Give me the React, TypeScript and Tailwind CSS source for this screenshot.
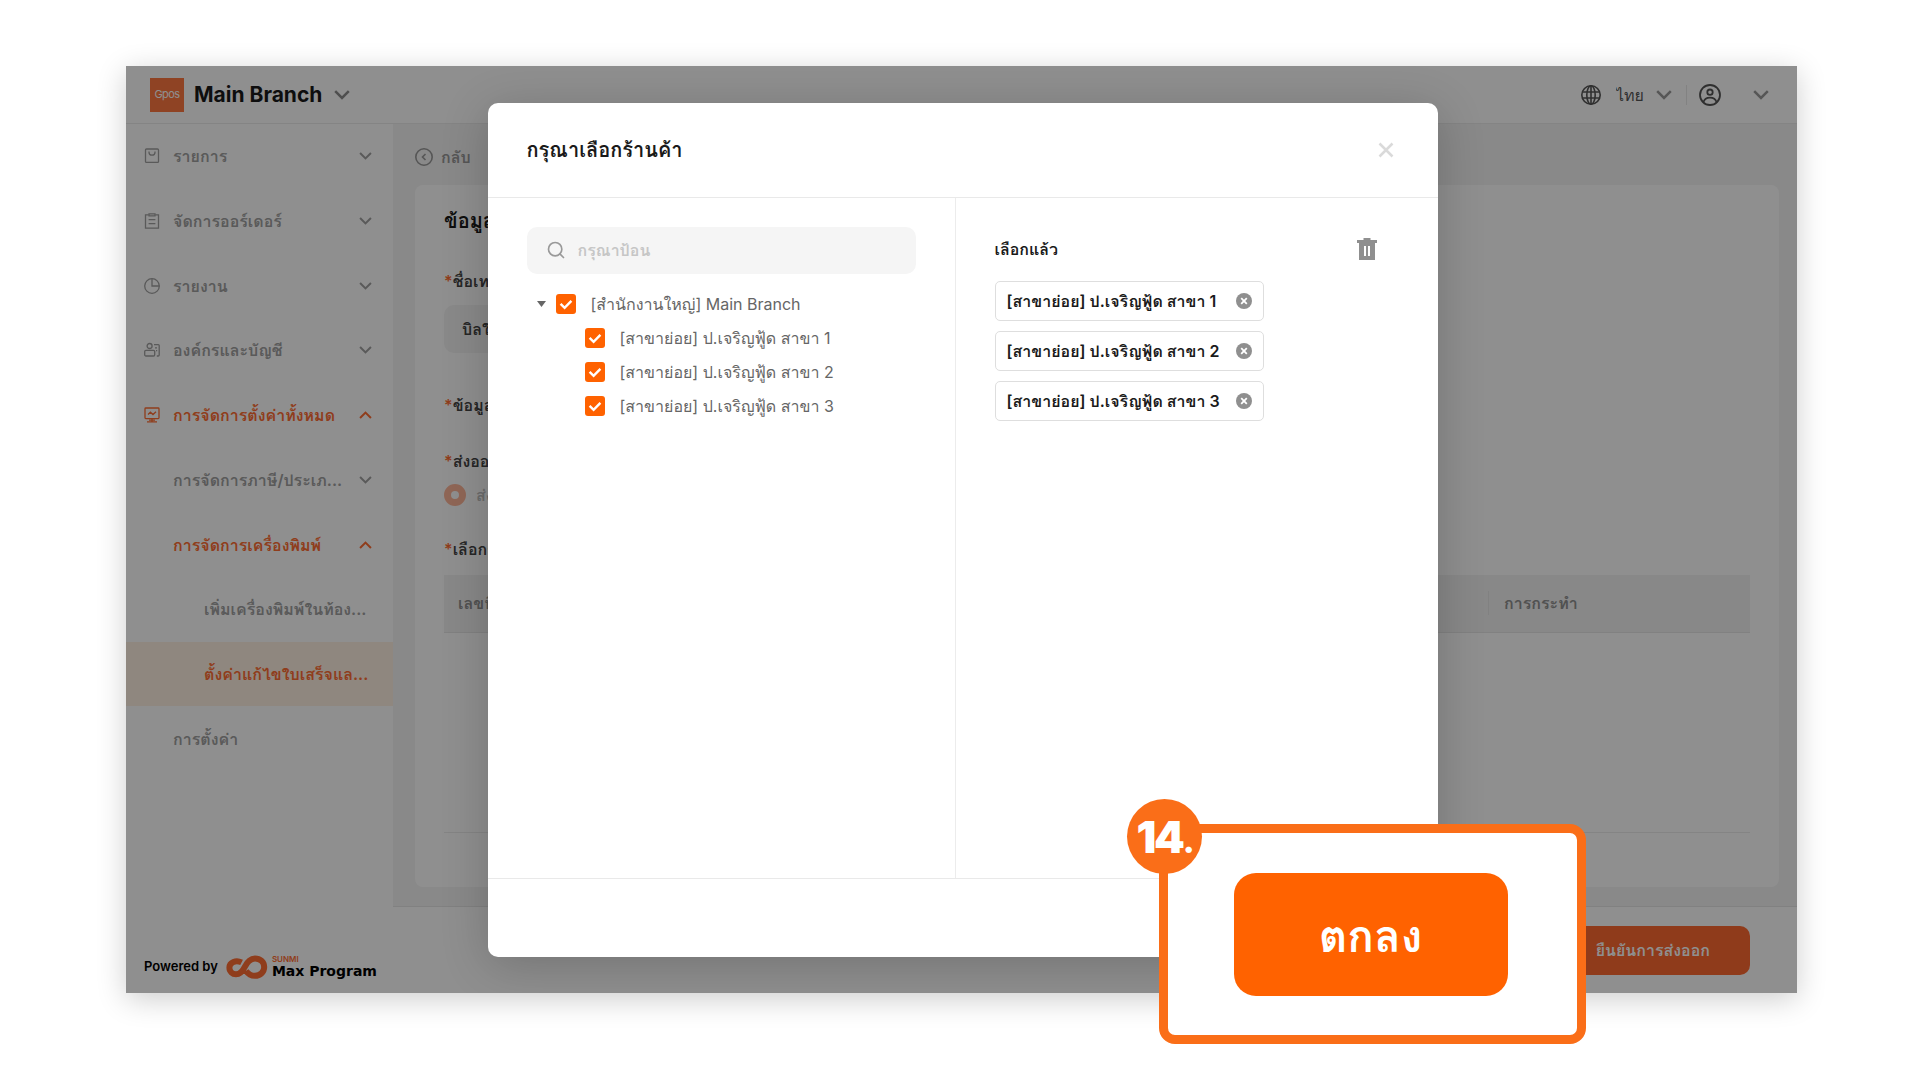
import React, { useState } from 'react';
import { Search } from 'lucide-react';

interface MenuItem {
  id: string;
  label: string;
  level: 0 | 1 | 2;
  icon?: React.ReactNode;
  arrow?: 'down' | 'up';
  active?: boolean;
  selected?: boolean;
}

const iconProps = {
  viewBox: '0 0 16 16',
  fill: 'none',
  stroke: 'currentColor',
  strokeWidth: 1.3,
  className: 'h-4 w-4 shrink-0',
};

const OrdersIcon = () => (
  <svg {...iconProps}>
    <rect x="1.5" y="1" width="13" height="13.4" rx="1" />
    <path d="M5 3.6v.6a3 3 0 0 0 6 0v-.6" />
  </svg>
);

const ClipboardIcon = () => (
  <svg {...iconProps}>
    <path d="M4.800 1.800H1.500v13.400h13V1.800h-3.300" />
    <path d="M5 .8h6v2H5zM4.600 6.600h6.800M4.600 10.600h6.800" />
  </svg>
);

const ReportIcon = () => (
  <svg {...iconProps}>
    <circle cx="8" cy="8" r="7.3" />
    <path d="M8 .8V8h7.2" />
  </svg>
);

const OrgIcon = () => (
  <svg {...iconProps}>
    <circle cx="5.6" cy="4" r="2.5" />
    <rect x=".7" y="8.4" width="10" height="5.6" rx="1.2" />
    <path d="M10 2.6h4.2a1 1 0 0 1 1 1V13a1 1 0 0 1-1 1h-1.4M11 5.8h2M12 8.6h1.2" />
  </svg>
);

const SettingsIcon = () => (
  <svg {...iconProps}>
    <rect x="1" y="1" width="14" height="10.6" rx=".8" />
    <path d="M4 7.4l2.4-2.2 2.6 2.4L12 4.8M8 11.6v3M3 14.8h10M5 13.2h6" />
  </svg>
);

const Chevron: React.FC<{ className?: string; up?: boolean }> = ({ className = '', up }) => (
  <svg
    viewBox="0 0 16 10"
    className={`${className} ${up ? 'rotate-180' : ''}`}
    fill="none"
    stroke="currentColor"
    strokeWidth="2.5"
  >
    <path d="M1.2 1.2L8 8l6.800-6.800" />
  </svg>
);

const MENU: MenuItem[] = [
  { id: 'orders', label: 'รายการ', level: 0, icon: <OrdersIcon />, arrow: 'down' },
  { id: 'manage', label: 'จัดการออร์เดอร์', level: 0, icon: <ClipboardIcon />, arrow: 'down' },
  { id: 'report', label: 'รายงาน', level: 0, icon: <ReportIcon />, arrow: 'down' },
  { id: 'org', label: 'องค์กรและบัญชี', level: 0, icon: <OrgIcon />, arrow: 'down' },
  { id: 'settings', label: 'การจัดการตั้งค่าทั้งหมด', level: 0, icon: <SettingsIcon />, arrow: 'up', active: true },
  { id: 'tax', label: 'การจัดการภาษี/ประเภ...', level: 1, arrow: 'down' },
  { id: 'printer', label: 'การจัดการเครื่องพิมพ์', level: 1, arrow: 'up', active: true },
  { id: 'add-printer', label: 'เพิ่มเครื่องพิมพ์ในท้อง...', level: 2 },
  { id: 'receipt', label: 'ตั้งค่าแก้ไขใบเสร็จแล...', level: 2, active: true, selected: true },
  { id: 'config', label: 'การตั้งค่า', level: 1 },
];

const BRANCHES = [
  '[สาขาย่อย] ป.เจริญฟู้ด สาขา 1',
  '[สาขาย่อย] ป.เจริญฟู้ด สาขา 2',
  '[สาขาย่อย] ป.เจริญฟู้ด สาขา 3',
];

const PAD = { 0: 'pl-[18px]', 1: 'pl-[47px]', 2: 'pl-[78px]' };

const Sidebar: React.FC = () => (
  <aside className="flex w-[267px] shrink-0 flex-col justify-between bg-white">
    <nav className="grid h-[647px] grid-rows-10">
      {MENU.map((item) => (
        <button
          key={item.id}
          className={`flex items-center gap-[13px] whitespace-nowrap text-left text-base font-semibold ${PAD[item.level]} ${
            item.active ? 'text-[#ff6d32]' : 'text-[#a0a0a0]'
          } ${item.selected ? 'bg-[#fff0e2]' : ''}`}
        >
          {item.icon}
          <span>{item.label}</span>
          {item.arrow && <Chevron up={item.arrow === 'up'} className="mr-[21px] ml-auto h-2 w-[13px]" />}
        </button>
      ))}
    </nav>

    <div className="flex items-center gap-2 pb-[14px] pl-[18px]">
      <span className="text-[13px] font-semibold">Powered by</span>
      <svg viewBox="0 0 42 24" className="h-6 w-[42px]" fill="none" stroke="#ff6d32" strokeWidth="6">
        <path d="M15.600 7.400C10 4.600 3.400 7.200 3.400 12.600c0 4.200 3.200 6.600 6.600 6.600 4.400 0 6.400-2.600 8.800-7.400C21.400 6.400 24 3.600 29 3.400c5 0 9.200 3.600 9.200 8.600s-4 8.800-9.200 8.800c-4.400 0-7-2-9-5" />
      </svg>
      <span className="-ml-1 flex flex-col">
        <span className="text-[8px] leading-[8px] font-semibold text-[#ff6d32]">SUNMI</span>
        <span className="font-['DejaVu_Sans',sans-serif] text-sm leading-4 font-bold">Max Program</span>
      </span>
    </div>
  </aside>
);

const TopBar: React.FC = () => (
  <header className="flex h-[58px] items-center border-b border-[#ececec] bg-white pr-7 pl-6">
    <span className="flex h-[34px] w-[34px] items-center justify-center bg-[#ff7840] text-[11px] tracking-tighter text-white">
      Gpos
    </span>
    <button className="ml-[10px] flex items-center gap-3 text-[21px] font-bold text-[#1a1a1a]">
      Main Branch
      <Chevron className="h-[10px] w-4 text-[#8c8c8c]" />
    </button>

    <div className="ml-auto flex items-center text-[#555]">
      <svg viewBox="0 0 20 20" className="h-5 w-5" fill="none" stroke="currentColor" strokeWidth="1.600">
        <circle cx="10" cy="10" r="9.200" />
        <ellipse cx="10" cy="10" rx="4.200" ry="9.200" />
        <path d="M10 .8v18.400M1.500 7h17M1.500 13h17" />
      </svg>
      <label className="relative ml-[15px] flex items-center">
        <span className="sr-only">ภาษา</span>
        <select className="h-8 w-14 appearance-none bg-transparent text-base leading-8" defaultValue="th">
          <option value="th">ไทย</option>
        </select>
        <Chevron className="pointer-events-none absolute right-0 h-[10px] w-4 text-[#999]" />
      </label>
      <span className="mr-3 ml-[14px] h-5 w-px bg-[#e8e8e8]" />
      <button className="flex items-center gap-8" aria-label="บัญชีผู้ใช้">
        <svg viewBox="0 0 22 22" className="h-[22px] w-[22px]" fill="none" stroke="currentColor" strokeWidth="1.800">
          <circle cx="11" cy="11" r="10" />
          <circle cx="11" cy="8.200" r="2.700" />
          <path d="M4.400 18.200c1-3.400 3.600-4.600 6.600-4.600s5.600 1.200 6.600 4.600" />
        </svg>
        <Chevron className="h-[10px] w-4 text-[#999]" />
      </button>
    </div>
  </header>
);

const FieldLabel: React.FC<{ htmlFor?: string; children: React.ReactNode }> = ({ htmlFor, children }) => (
  <label htmlFor={htmlFor} className="block text-base leading-6 font-semibold text-[#444]">
    <span className="text-[#ff6d32]">*</span>
    {children}
  </label>
);

const TemplatePage: React.FC = () => (
  <main className="flex min-w-0 flex-1 flex-col bg-[#f4f4f4]">
    <a href="#back" className="flex h-[61px] items-center gap-2 pt-1 pl-[22px] text-base font-semibold text-[#999]">
      <svg viewBox="0 0 18 18" className="h-[18px] w-[18px]" fill="none" stroke="currentColor" strokeWidth="1.600">
        <circle cx="9" cy="9" r="8.200" />
        <path d="M10.500 6L7.500 9l3 3" />
      </svg>
      กลับ
    </a>

    <section className="mr-[18px] ml-[22px] flex-1 rounded-lg bg-white px-[29px] pt-5">
      <h2 className="text-xl leading-8 font-bold text-[#1a1a1a]">ข้อมูลพื้นฐาน</h2>
      <div className="mt-8">
        <FieldLabel htmlFor="template">ชื่อเทมเพลต</FieldLabel>
        <input
          id="template"
          type="text"
          defaultValue="บิลใบเสร็จ"
          className="mt-3 block h-12 w-[600px] rounded-[10px] bg-[#f4f4f4] px-[18px] text-base font-semibold text-[#444]"
        />
      </div>
      <div className="mt-10">
        <FieldLabel>ข้อมูลใบเสร็จ</FieldLabel>
      </div>
      <div className="mt-8">
        <FieldLabel>ส่งออกไปยัง</FieldLabel>
        <label className="mt-[10px] flex items-center gap-[10px] text-base font-semibold text-[#c0c0c0]">
          <input
            type="radio"
            defaultChecked
            className="h-[22px] w-[22px] appearance-none rounded-full border-[7px] border-[#ffb79a] bg-white"
          />
          ส่งออกทั้งหมด
        </label>
      </div>
      <div className="mt-[30px]">
        <FieldLabel>เลือกร้านค้า</FieldLabel>
      </div>
      <div className="mt-[14px] h-[258px] border-b border-[#ececec]">
        <table className="w-full text-left text-base text-[#909090]">
          <thead>
            <tr className="h-[57px] border-b border-[#e6e6e6] bg-[#f2f2f2]">
              <th className="pl-[14px] font-semibold">เลขที่</th>
              <th className="w-[262px] font-semibold">
                <span className="block border-l border-[#e6e6e6] pl-[15px]">การกระทำ</span>
              </th>
            </tr>
          </thead>
        </table>
      </div>
    </section>

    <footer className="mt-[19px] flex h-[87px] items-center justify-end border-t border-[#e6e6e6] bg-white pr-[47px]">
      <button className="h-[49px] rounded-[10px] bg-[#ff6a30] px-10 text-base font-semibold text-white">
        ยืนยันการส่งออก
      </button>
    </footer>
  </main>
);

const Tick: React.FC<{ label: string }> = ({ label }) => (
  <label className="flex h-[34px] items-center gap-[15px] text-base text-[#666]">
    <span className="relative flex h-5 w-5 items-center justify-center">
      <input type="checkbox" defaultChecked className="h-5 w-5 appearance-none rounded-[3px] bg-[#ff6200]" />
      <svg
        viewBox="0 0 20 20"
        className="pointer-events-none absolute h-5 w-5"
        fill="none"
        stroke="#fff"
        strokeWidth="2.400"
      >
        <path d="M4.600 9.800l4 4 6.800-7" />
      </svg>
    </span>
    {label}
  </label>
);

const StoreModal: React.FC = () => {
  const [selected, setSelected] = useState(BRANCHES);

  return (
    <div
      role="dialog"
      aria-labelledby="store-title"
      className="flex h-[854px] w-full max-w-[950px] flex-col rounded-[10px] bg-white shadow-[0_8px_48px_rgba(0,0,0,0.2)]"
    >
      <div className="flex h-[95px] items-center justify-between border-b border-[#e9e9e9] pr-11 pl-[39px]">
        <h1 id="store-title" className="text-xl font-bold text-[#1a1a1a]">
          กรุณาเลือกร้านค้า
        </h1>
        <button aria-label="ปิด">
          <svg viewBox="0 0 16 16" className="h-4 w-4" stroke="#dadada" strokeWidth="2.500">
            <path d="M1.500 1.500l13 13M14.500 1.500l-13 13" />
          </svg>
        </button>
      </div>

      <div className="flex flex-1">
        <div className="w-[468px] border-r border-[#ececec] px-[39px] pt-[29px]">
          <label className="flex h-[47px] items-center gap-3 rounded-[10px] bg-[#f5f5f5] px-[19px]">
            <span className="sr-only">ค้นหา</span>
            <Search className="h-5 w-5 text-[#999]" strokeWidth={2} />
            <input
              type="text"
              placeholder="กรุณาป้อน"
              className="h-8 min-w-0 flex-1 bg-transparent text-base font-semibold outline-none placeholder:text-[#c6c6c6]"
            />
          </label>
          <div className="mt-[13px] flex items-center gap-[10px] pl-[10px]">
            <button aria-label="ย่อ">
              <svg viewBox="0 0 9 6" className="h-[6px] w-[9px]" fill="#666">
                <path d="M0 0h9L4.500 6z" />
              </svg>
            </button>
            <Tick label="[สำนักงานใหญ่] Main Branch" />
          </div>
          <div className="pl-[58px]">
            {BRANCHES.map((name) => (
              <Tick key={name} label={name} />
            ))}
          </div>
        </div>

        <div className="flex-1 pt-[35px] pr-[61px] pl-[39px]">
          <div className="flex h-8 items-center justify-between">
            <h3 className="text-base font-bold text-[#1a1a1a]">เลือกแล้ว</h3>
            <button aria-label="ลบทั้งหมด" onClick={() => setSelected([])}>
              <svg viewBox="0 0 20 22" className="h-[22px] w-5" fill="#8f8f8f" fillRule="evenodd">
                <path d="M6.500 0h7v2H20v3h-2v17H2V5H0V2h6.500zM7 8v10h2V8zm4 0v10h2V8z" />
              </svg>
            </button>
          </div>
          <ul className="mt-4 flex flex-col items-start gap-[10px]">
            {selected.map((name) => (
              <li
                key={name}
                className="flex h-10 min-w-[269px] items-center justify-between gap-3 rounded-[5px] border border-[#dedede] px-[11px] text-base font-semibold text-[#1a1a1a]"
              >
                {name}
                <button
                  aria-label={`ลบ ${name}`}
                  onClick={() => setSelected(selected.filter((s) => s !== name))}
                >
                  <svg viewBox="0 0 16 16" className="h-4 w-4" stroke="#fff" strokeWidth="1.800">
                    <circle cx="8" cy="8" r="8" fill="#8f8f8f" stroke="none" />
                    <path d="M5.200 5.200l5.600 5.600M10.800 5.200l-5.600 5.600" />
                  </svg>
                </button>
              </li>
            ))}
          </ul>
        </div>
      </div>

      <div className="h-[79px] border-t border-[#e9e9e9]" />
    </div>
  );
};

const Callout: React.FC = () => (
  <div className="absolute right-[334px] bottom-9 flex h-[220px] w-[427px] items-center justify-center rounded-2xl border-[9px] border-[#fa6e18] bg-white pr-1">
    <span className="absolute -top-[34px] -left-[41px] flex h-[75px] w-[75px] items-center justify-center rounded-full bg-[#fa6e18] text-[44px] font-black tracking-tighter text-white">
      <span>
        14<span className="text-[32px]">.</span>
      </span>
    </span>
    <button className="h-[123px] w-[274px] rounded-[22px] bg-[#ff6200] pt-1 text-[44px] font-bold text-white">
      ตกลง
    </button>
  </div>
);

export default function App() {
  return (
    <div className="relative flex min-h-screen bg-white pt-[66px] pr-[123px] pb-[87px] pl-[126px] font-['Inter','Loma','Noto_Sans_Thai',sans-serif]">
      <div className="relative flex min-w-0 flex-1 flex-col shadow-[0_6px_28px_rgba(0,0,0,0.2)]">
        <TopBar />
        <div className="flex flex-1">
          <Sidebar />
          <TemplatePage />
        </div>
        <div className="absolute inset-0 flex items-center justify-center overflow-hidden bg-black/44 pl-[2px]">
          <StoreModal />
        </div>
      </div>
      <Callout />
    </div>
  );
}
